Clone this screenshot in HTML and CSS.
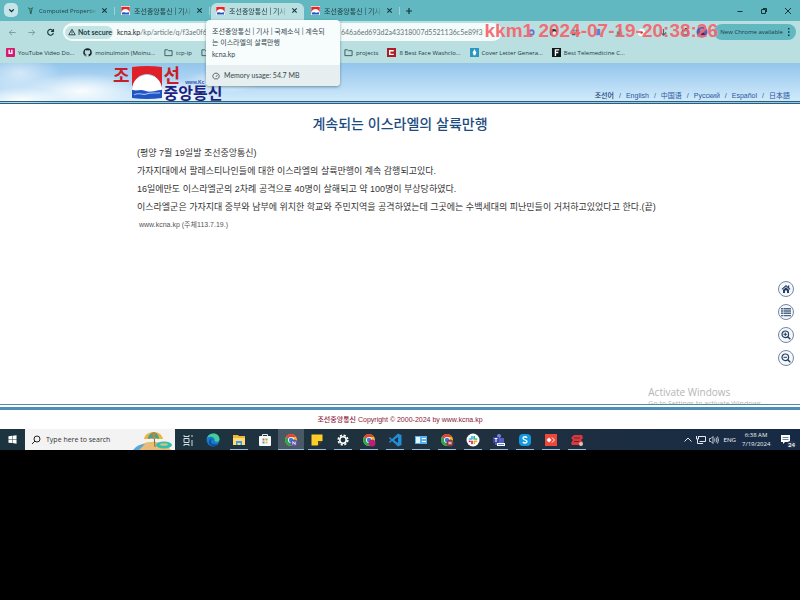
FILE: index.html
```html
<!DOCTYPE html>
<html lang="ko">
<head>
<meta charset="utf-8">
<title>조선중앙통신 | 기사 | 국제소식</title>
<link rel="stylesheet" href="styles.css">
</head>
<body>
<svg class="defs" aria-hidden="true">
  <symbol id="kcna" viewBox="0 0 32 32"><path fill="#fff" d="M0 0h32v32H0z"/><path fill="#e32626" d="M1 3h30v20C26 7 6 7 1 23z"/><path fill="#2257c4" d="M3 22c5 3 8-1 12 1s8 0 14-1v8H3z"/></symbol>
  <symbol id="folder" viewBox="0 0 10 10"><path fill="none" stroke="#37545a" d="M1 2h3l1 1h4v5.500H1z"/></symbol>
  <symbol id="close" viewBox="0 0 8 8"><path fill="none" stroke="#14343a" stroke-width="1.200" d="M1.500 1.500l5 5M6.500 1.500l-5 5"/></symbol>
  <symbol id="chrome" viewBox="0 0 14 14"><circle cx="7" cy="7" r="6" fill="#f2bd2a"/><path fill="#df4436" d="M7 7L1.800 4A6 6 0 0 1 12.200 4H7z"/><path fill="#2fa352" d="M7 7L1.800 4A6 6 0 0 0 7 13l2.600-4.500z"/><circle cx="7" cy="7" r="3" fill="#fff"/><circle cx="7" cy="7" r="2.200" fill="#3a7be0"/></symbol>
</svg>

<header class="browser">
  <div class="tabstrip">
    <button class="tab-search" aria-label="Search tabs"><svg viewBox="0 0 8 8"><path fill="none" stroke="#123" stroke-width="1.200" d="M2 3l2 2 2-2"/></svg></button>
    <div class="tab"><svg class="fav" viewBox="0 0 10 10"><path fill="#2d5f50" d="M2 1l3 2 3-2-1 3-1 5H4.500L4 5z"/><path fill="#44a376" d="M3 3l2 3 2-3-2 1z"/></svg><span class="tab-title small">Computed Propertie</span><button class="x" aria-label="Close tab"><svg><use href="#close"/></svg></button></div>
    <div class="tab"><svg class="fav"><use href="#kcna"/></svg><span class="tab-title">조선중앙통신 | 기사 |</span><button class="x" aria-label="Close tab"><svg><use href="#close"/></svg></button></div>
    <div class="tab active"><svg class="fav"><use href="#kcna"/></svg><span class="tab-title">조선중앙통신 | 기사 |</span><button class="x" aria-label="Close tab"><svg><use href="#close"/></svg></button>
      <div class="tooltip" role="tooltip">
        <div class="tip-body">
          <p class="tip-title">조선중앙통신 | 기사 | 국제소식 | 계속되는 이스라엘의 살륙만행</p>
          <p>kcna.kp</p>
        </div>
        <div class="tip-foot"><svg viewBox="0 0 10 10"><path fill="none" stroke="#37474c" d="M3 8.500A4 3.800 0 1 1 7 8.500zM5 6l2-2.500"/></svg>Memory usage: 54.7 MB</div>
      </div>
    </div>
    <div class="tab"><svg class="fav"><use href="#kcna"/></svg><span class="tab-title">조선중앙통신 | 기사 |</span><button class="x" aria-label="Close tab"><svg><use href="#close"/></svg></button></div>
    <button class="new-tab" aria-label="New tab"><svg viewBox="0 0 8 8"><path stroke="#14343a" stroke-width="1.200" d="M4 1v6M1 4h6"/></svg></button>
    <div class="win-buttons">
      <button aria-label="Minimize"><svg viewBox="0 0 8 8"><path stroke="#14343a" d="M1.500 4.500h5"/></svg></button>
      <button aria-label="Restore"><svg viewBox="0 0 8 8"><path fill="none" stroke="#14343a" d="M1.500 2.500h4v4h-4zM3 1.500h3.500V5"/></svg></button>
      <button aria-label="Close"><svg viewBox="0 0 8 8"><path stroke="#14343a" d="M1 1l6 6M7 1L1 7"/></svg></button>
    </div>
  </div>

  <div class="toolbar">
    <button class="nav dim" aria-label="Back"><svg viewBox="0 0 10 10"><path fill="none" stroke="currentColor" d="M8.500 5h-7M4.500 2l-3 3 3 3"/></svg></button>
    <button class="nav dim" aria-label="Forward"><svg viewBox="0 0 10 10"><path fill="none" stroke="currentColor" d="M1.500 5h7M5.500 2l3 3-3 3"/></svg></button>
    <button class="nav" aria-label="Reload"><svg viewBox="0 0 10 10"><path fill="none" stroke="currentColor" stroke-width="1.300" d="M8 3.500A3.200 3.200 0 1 0 8.200 5.500M8.300 1v2.800H5.500"/></svg></button>
    <div class="omnibox">
      <button class="chip"><svg viewBox="0 0 10 10"><path fill="none" stroke="#17282c" d="M5 1.500L9 8.500H1zM5 4v2.200M5 7v1"/></svg>Not secure</button>
      <div class="url"><b>kcna.kp</b>/kp/article/q/f3ae0f6</div>
      <div class="url rest">646a6ed693d2a43318007d5521136c5e89f3</div>
    </div>
    <div class="extensions">
      <svg viewBox="0 0 10 10"><circle cx="5" cy="5" r="3.500" fill="#6078c8"/><circle cx="5" cy="5" r="1.500" fill="#b9dfe0"/></svg>
      <svg viewBox="0 0 10 10"><circle cx="5" cy="5" r="4" fill="#242c33"/><circle cx="6" cy="6" r="2.500" fill="#e6eef0"/></svg>
      <svg viewBox="0 0 10 10"><path fill="#555b65" d="M1 2h3v2H1zM5 2h4v2H5zM1 6h4v2H1zM7 5h2v3H7z"/></svg>
      <svg viewBox="0 0 10 10"><rect x="2" y="1" width="6" height="7" fill="#5d83ca"/></svg>
      <svg viewBox="0 0 10 10"><path fill="#6d8d86" d="M2 4h2V1h3v3h1v5H2z"/></svg>
      <svg viewBox="0 0 10 10"><circle cx="5" cy="5" r="4" fill="#fff"/><circle cx="5" cy="5" r="1.500" fill="#cc2929"/></svg>
      <svg viewBox="0 0 10 10"><path fill="none" stroke="#46666a" stroke-width="1.300" d="M5 1v7M2 5l3 3 3-3"/></svg>
      <svg viewBox="0 0 10 10"><path fill="none" stroke="#252f32" stroke-width="1.300" d="M2 3h2c0-3 3-3 3 0h1v5H2z"/></svg>
    </div>
    <svg class="avatar" viewBox="0 0 12 12"><circle cx="6" cy="6" r="5.500" fill="#625bad"/><path fill="#302c68" d="M3 10c0-5 6-5 6 0z"/><circle cx="6" cy="4.500" r="2" fill="#be91a2"/></svg>
    <button class="update small">New Chrome available<svg viewBox="0 0 4 10"><path fill="#0c3036" d="M1 1h1.500v1.500H1zM1 4.300h1.500v1.500H1zM1 7.500h1.500V9H1z"/></svg></button>
  </div>

  <nav class="bookmarks small">
    <a href="#"><svg viewBox="0 0 10 10"><rect width="10" height="10" rx="1" fill="#d81b72"/><path fill="none" stroke="#fff" stroke-width="1.500" d="M3.500 2v4h3V2"/></svg>YouTube Video Do...</a>
    <a href="#"><svg viewBox="0 0 16 16"><path fill="#15262b" d="M8 .5a7.500 7.500 0 0 0-2.400 14.600c.4.100.5-.2.500-.4v-1.400c-2 .4-2.600-.9-2.600-.9-.4-.9-.9-1.100-.9-1.100-.7-.5 0-.5 0-.5.800.1 1.200.8 1.200.8.700 1.200 1.800.8 2.200.6.100-.5.300-.8.500-1-1.700-.2-3.400-.8-3.400-3.700 0-.8.300-1.500.8-2-.1-.2-.3-1 .1-2 0 0 .6-.2 2 .8a7 7 0 0 1 4 0c1.400-1 2-.8 2-.8.400 1 .2 1.800.1 2 .5.500.8 1.200.8 2 0 2.900-1.700 3.500-3.400 3.700.3.200.5.700.5 1.400v2.100c0 .2.100.5.500.4A7.500 7.500 0 0 0 8 .5z"/></svg>moinulmoin (Moinu...</a>
    <a href="#"><svg><use href="#folder"/></svg>tcp-ip</a>
    <a href="#" class="wide" aria-label="Folder"><svg><use href="#folder"/></svg></a>
    <a href="#"><svg><use href="#folder"/></svg>projects</a>
    <a href="#"><svg viewBox="0 0 10 10"><rect width="10" height="10" fill="#ad1d25"/><path fill="none" stroke="#fff" stroke-width="1.500" d="M7.500 3H3v4h4.500"/></svg>8 Best Face Washclo...</a>
    <a href="#"><svg viewBox="0 0 10 10"><rect width="10" height="10" fill="#2b96bf"/><path fill="#fff" d="M5 1l2 4-1 3H4L3 5z"/></svg>Cover Letter Genera...</a>
    <a href="#"><svg viewBox="0 0 10 10"><rect width="10" height="10" fill="#10171a"/><path fill="none" stroke="#fff" stroke-width="1.500" d="M3.800 9V2H8M3.800 5H7"/></svg>Best Telemedicine C...</a>
  </nav>
</header>

<div class="site">
  <header class="masthead">
    <a href="#" class="logo">
      <span class="red">조</span>
      <svg viewBox="0 0 32 32" preserveAspectRatio="none"><path fill="#df2028" d="M1 1Q16-1 31 1v21C28 3 4 3 1 22z"/><path fill="#fff" d="M1 23C2 4 30 4 31 23q-15 3-30 0z"/><path fill="#2155c5" d="M1 23c5 2 8-1 13 1s10 0 17-1v8Q16 33 1 31z"/><path fill="none" stroke="#a9c7f2" d="M3 28c6-3 8 1 13-1s8 0 13-1"/></svg>
      <span class="logo-right"><span class="logo-top"><span class="red">선</span><small>www.Kc</small></span><span class="navy">중앙통신</span></span>
    </a>
    <nav class="langs"><a href="#" class="on">조선어</a><i>/</i><a href="#">English</a><i>/</i><a href="#">中国语</a><i>/</i><a href="#">Русский</a><i>/</i><a href="#">Español</a><i>/</i><a href="#">日本語</a></nav>
  </header>

  <main>
    <h1>계속되는 이스라엘의 살륙만행</h1>
    <article>
      <p>(평양 7월 19일발 조선중앙통신)</p>
      <p>가자지대에서 팔레스티나인들에 대한 이스라엘의 살륙만행이 계속 감행되고있다.</p>
      <p>16일에만도 이스라엘군의 2차례 공격으로 40명이 살해되고 약 100명이 부상당하였다.</p>
      <p>이스라엘군은 가자지대 중부와 남부에 위치한 학교와 주민지역을 공격하였는데 그곳에는 수백세대의 피난민들이 거처하고있었다고 한다.(끝)</p>
      <p class="source">www.kcna.kp (주체113.7.19.)</p>
    </article>
    <div class="side">
      <button aria-label="Home"><svg viewBox="0 0 10 10"><path fill="#27405f" d="M5 1l4.500 4-.7.700L5 2.500 1.200 5.700.5 5zM7 1.500h1.200V4L7 3zM2 5.700l3-2.500 3 2.500V9H6V6.500H4V9H2z"/></svg></button>
      <button aria-label="List"><svg viewBox="0 0 10 10"><path fill="#4c6580" d="M0 1h2v1.500H0zM2.500 1H10v1.500H2.500zM0 3.300h2v1.500H0zM2.500 3.300H10v1.500H2.500zM0 5.600h2v1.500H0zM2.500 5.600H10v1.500H2.500zM0 8h2v1.300H0zM2.500 8H10v1.300H2.500z"/></svg></button>
      <button aria-label="Zoom in"><svg viewBox="0 0 10 10"><circle cx="4.300" cy="4.300" r="3.300" fill="none" stroke="#27405f" stroke-width="1.200"/><path stroke="#27405f" stroke-width="1.500" d="M6.800 6.800l2.500 2.500"/><path stroke="#27405f" d="M4.300 2.500v3.600M2.500 4.300h3.600"/></svg></button>
      <button aria-label="Zoom out"><svg viewBox="0 0 10 10"><circle cx="4.300" cy="4.300" r="3.300" fill="none" stroke="#27405f" stroke-width="1.200"/><path stroke="#27405f" stroke-width="1.500" d="M6.800 6.800l2.500 2.500"/><path stroke="#27405f" d="M2.500 4.300h3.600"/></svg></button>
    </div>
    <div class="watermark"><strong>Activate Windows</strong><span>Go to Settings to activate Windows.</span></div>
  </main>
  <footer>조선중앙통신 Copyright © 2000-2024 by www.kcna.kp</footer>
</div>

<div class="taskbar">
  <button class="start" aria-label="Start"><svg viewBox="0 0 10 10"><path fill="#fff" d="M.5 1.500l4-.6v3.800h-4zM5 .8L9.500.2v4.500H5zM.5 5.200h4V9l-4-.5zM5 5.200h4.500v4.500L5 9z"/></svg></button>
  <label class="search"><svg class="lens" viewBox="0 0 10 10"><circle cx="6" cy="4" r="3" fill="none" stroke="#222"/><path stroke="#222" d="M4 6L1 9"/></svg><input type="text" placeholder="Type here to search" aria-label="Search">
    <svg class="beach" viewBox="0 0 42 20"><path fill="#e8bd79" d="M2 20C8 10 28 8 38 20z"/><path fill="#5aa6da" d="M0 20c3-4 7-6 12-6l-6 6z"/><path stroke="#86613d" d="M21 5l1 12"/><path fill="#efb43d" d="M11 9C12 4 16 2 21 2s8 3 9 7z"/><path fill="#44a58a" d="M15 9c0-4 3-6 6-7 3 1 5 3 5 7l-3-1-2 1-2-1z"/><path fill="#e4763b" d="M20 8V2h2v6z"/><ellipse cx="31" cy="15" rx="8" ry="3.500" fill="#2fc0ae"/><ellipse cx="31" cy="14.500" rx="4" ry="1.300" fill="#d9bd83"/></svg>
  </label>
  <div class="apps">
    <button class="plain" aria-label="Task view"><svg viewBox="0 0 14 14"><path fill="none" stroke="#d4dde2" d="M3 5.500h5v4H3zM3 2v1.500h5V2M3 13v-1.500h5V13M11 2v2M11 7v6"/></svg></button>
    <button class="plain" aria-label="Edge"><svg viewBox="0 0 14 14"><circle cx="7" cy="7" r="6.500" fill="#1879cf"/><path fill="#43cf97" d="M1 5C3-1 13-1 13.500 6c0 3-4 3.500-5 2C10 5 5 2 1 5z"/><path fill="#114b9c" d="M5 7c-1 4 3 5 7 4-3 4-9 2-9-2 0-2 2-4 4-3-1 0-2 .5-2 1z"/></svg></button>
    <button aria-label="File Explorer"><svg viewBox="0 0 14 14"><path fill="#eeb43b" d="M1 2h5l1 1h6v9H1z"/><path fill="#ffdc75" d="M1 5h12v7H1z"/><path fill="#3e9fdf" d="M4 8h6v4H8.500v-2h-3v2H4z"/></svg></button>
    <button class="plain" aria-label="Store"><svg viewBox="0 0 14 14"><path fill="none" stroke="#e5eef3" d="M4.500 4V1.500h5V4"/><rect x="1" y="3" width="12" height="10" rx="1" fill="#f7fafc"/><path fill="#e95b35" d="M4.500 5.500h2v2h-2z"/><path fill="#7cb83e" d="M7.500 5.500h2v2h-2z"/><path fill="#27a4e3" d="M4.500 8.500h2v2h-2z"/><path fill="#f7ba2c" d="M7.500 8.500h2v2h-2z"/></svg></button>
    <button class="current" aria-label="Chrome"><svg viewBox="0 0 14 14"><use href="#chrome"/><circle cx="10" cy="10" r="3.500" fill="#6252a8"/><path fill="none" stroke="#fff" stroke-width=".8" d="M8.800 11.500v-3l2.400 3v-3"/></svg></button>
    <button aria-label="Sticky Notes"><svg viewBox="0 0 14 14"><path fill="#ffcf28" d="M1.500 1.500h11v6l-5 5h-6z"/><path fill="#4b421e" d="M8 12.500V8h4.500z"/></svg></button>
    <button aria-label="Settings"><svg viewBox="0 0 14 14"><circle cx="7" cy="7" r="4.800" fill="none" stroke="#fff" stroke-width="1.600" stroke-dasharray="2.200 1.570"/><circle cx="7" cy="7" r="3.200" fill="none" stroke="#fff" stroke-width="1.600"/></svg></button>
    <button aria-label="Chrome profile"><svg viewBox="0 0 14 14"><use href="#chrome"/><circle cx="10" cy="10" r="3.500" fill="#bd2071"/></svg></button>
    <button aria-label="VS Code"><svg viewBox="0 0 14 14"><path fill="#238dd5" d="M10 .5l3.500 1.500v10L10 13.500 4 8 2 9.700.7 9 3 7 .7 5 2 4.300 4 6zM10 4L6 7l4 3z"/></svg></button>
    <button aria-label="Contacts"><svg viewBox="0 0 14 14"><path fill="#58b3ec" d="M1 3h12v8H1z"/><path fill="#e5f5ff" d="M2 4h4v6H2z"/><path stroke="#fff" d="M8 5.500h4M8 8.500h4"/></svg></button>
    <button aria-label="Chrome profile 2"><svg viewBox="0 0 14 14"><use href="#chrome"/><circle cx="10" cy="10" r="3.500" fill="#8c3442"/><path stroke="#fff" stroke-width=".8" d="M9 8.500v3M11 8.500v3M9 10h2"/></svg></button>
    <button aria-label="Slack"><svg viewBox="0 0 14 14"><circle cx="7" cy="7" r="6.500" fill="#fff"/><g stroke-width="1.700" stroke-linecap="round"><path stroke="#36b9df" d="M6 3.500v2.300M3.500 6h2"/><path stroke="#2eb67d" d="M8.200 3.500V6M10.500 6H9.800"/><path stroke="#e01e5a" d="M6 8.300v2.200M3.500 8.300h.5"/><path stroke="#e5ae2d" d="M8.300 8.300h2.200M8.300 10v.5"/></g></svg></button>
    <button aria-label="Teams"><svg viewBox="0 0 14 14"><circle cx="7" cy="3" r="2" fill="#7884dc"/><path fill="#5360bd" d="M3 5h9v7H3z"/><path fill="#3946a2" d="M1 4h6v6H1z"/><path stroke="#fff" d="M2.500 5.500h3M4 5.500V9"/><path fill="#fff" d="M5 10h8v3H5z"/><path fill="#408acf" d="M6 11h6v1H6z"/></svg></button>
    <button aria-label="Skype"><svg viewBox="0 0 14 14"><rect x="1" y="1" width="12" height="12" rx="4" fill="#1299df"/><path fill="none" stroke="#fff" stroke-width="1.400" d="M9 4.800C8 3.300 5 3.500 5 5.300s4 1.200 4 3.200-3 2-4.200.5"/></svg></button>
    <button aria-label="AnyDesk"><svg viewBox="0 0 14 14"><path fill="#ed493b" d="M1 1h12v12H1z"/><path fill="#fff" d="M5 4.500L7.500 7 5 9.500 2.500 7z"/><path fill="none" stroke="#fff" d="M8 4.500L10.500 7 8 9.500"/></svg></button>
    <button aria-label="Remote"><svg viewBox="0 0 14 14"><path fill="#d7393d" d="M4 2h8l1 3-2 2 2 2-2 3H2L1 10l2-3-2-2z"/><path stroke="#69252c" d="M4 5h6M4 8.500h5"/><circle cx="11" cy="11" r="2" fill="#e8c1c1"/></svg></button>
  </div>
  <div class="tray">
    <svg viewBox="0 0 10 10"><path fill="none" stroke="#e3eaf0" d="M1.500 6.500L5 3l3.500 3.500"/></svg>
    <svg viewBox="0 0 10 10"><path fill="none" stroke="#e3eaf0" d="M2.500 1.500h7v5h-6M.5 1v3h2V1M1.500 4v4.500H7"/></svg>
    <svg viewBox="0 0 10 10"><path fill="none" stroke="#e3eaf0" stroke-width=".8" d="M.5 3.500H2l2-2v7l-2-2H.5zM5.500 3.500q1 1.500 0 3M7 2.500q2 2.500 0 5M8.500 1.500q2 3.500 0 7"/></svg>
    <span class="lang">ENG</span>
    <time>6:38 AM<br>7/19/2024</time>
    <button class="notify" aria-label="Notifications"><svg viewBox="0 0 12 12"><path fill="#fff" d="M1 1h9v7H5L3 10V8H1z"/><path stroke="#7a8492" d="M2.500 3.500h6M2.500 5.500h6"/></svg><span>24</span></button>
  </div>
</div>
<div class="stamp">kkm1 2024-07-19-20:38:26</div>
</body>
</html>
```
FILE: styles.css
```css
* { box-sizing: border-box; }
body {
  margin: 0;
  min-height: 100vh;
  position: relative;
  background: #000;
  font-family: Lato, "Noto Sans CJK KR", sans-serif;
  font-size: 7px;
  line-height: 10px;
  color: #1d3a40;
}
p, h1 { margin: 0; }
button { padding: 0; border: 0; background: none; font: inherit; color: inherit; }
a { color: inherit; text-decoration: none; }
svg { display: block; flex: none; }
.defs { display: none; }
.small { font-family: "Open Sans", sans-serif; font-size: 6px; }

/* Browser window */
.browser { background: #b9dfe0; }
.tabstrip { display: flex; align-items: stretch; height: 21px; padding-left: 4px; background: #62b8c0; }
.tab-search {
  width: 14px; height: 14px; margin: 3px 3px 0 0; border-radius: 5px;
  background: #c4e5e7; display: grid; place-items: center;
}
.tab-search svg { width: 9px; height: 9px; }
.tab {
  position: relative; flex: 0 1 95px; min-width: 0; display: flex; align-items: center;
  padding: 0 7px 0 5px; gap: 4px;
}
.tab::after { content: ""; position: absolute; right: 1px; top: 7px; width: 1px; height: 8px; background: #9fd3d6; }
.tab.active::after { display: none; }
.tab.active::before {
  content: ""; position: absolute; inset: 3px 2px 0 0; background: #b9dfe0;
  border-radius: 6px 6px 0 0;
}
.fav { width: 9px; height: 9px; position: relative; }
.tab-title {
  position: relative; flex: 1; min-width: 0; overflow: hidden; white-space: nowrap;
  mask-image: linear-gradient(90deg, #000 85%, transparent);
}
.x { position: relative; width: 8px; height: 8px; }
.x svg { width: 7px; height: 7px; }
.new-tab { width: 16px; display: grid; place-items: center; }
.new-tab svg { width: 8px; height: 8px; }
.win-buttons { display: flex; margin-left: auto; }
.win-buttons button { width: 24px; display: grid; place-items: center; }
.win-buttons svg { width: 8px; height: 8px; }

.tooltip {
  position: absolute; z-index: 5; left: -5px; top: 20px; width: 134px;
  border-radius: 4px; overflow: hidden; background: #f7fcfd;
  box-shadow: 0 1px 3px #345a6a99; line-height: 11px; color: #35474c;
}
.tip-body { padding: 6px 10px 5px 6px; height: 45px; }
.tip-title { margin-bottom: 1px; word-break: break-all; }
.tip-foot { display: flex; align-items: center; gap: 4px; height: 21px; padding: 0 6px; background: #e6eeef; }
.tip-foot svg { width: 8px; height: 8px; }

.toolbar { display: flex; align-items: center; height: 22px; padding: 0 4px 0 3px; }
.nav { width: 19px; display: grid; place-items: center; }
.nav svg { width: 9px; height: 9px; }
.nav.dim { color: #73999e; }
.omnibox {
  display: flex; align-items: center; flex: 1; height: 18px; min-width: 0;
  margin-left: 3px; padding-left: 2px; border-radius: 9px; background: #f4fbfb;
}
.chip { display: flex; align-items: center; gap: 2px; width: 48px; height: 13px; padding: 0 3px; border-radius: 7px; background: #c3e3e4; white-space: nowrap; font-weight: 700; }
.chip svg { width: 8px; height: 8px; }
.url { width: 228px; padding-left: 4px; white-space: nowrap; color: #66757a; }
.url b { font-weight: 400; color: #17282c; }
.url.rest { flex: 1; min-width: 0; padding: 0; }
.extensions { display: flex; justify-content: space-around; width: 194px; flex: none; padding-left: 18px; }
.extensions svg { width: 9px; height: 9px; }
.avatar { width: 12px; height: 12px; margin-right: 6px; }
.update { display: flex; align-items: center; gap: 4px; height: 16px; padding: 0 5px 0 6px; border-radius: 8px; background: #62b8c0; white-space: nowrap; }
.update svg { width: 4px; height: 10px; }

.bookmarks { display: flex; align-items: center; gap: 9px; height: 20px; padding: 0 6px 1px; white-space: nowrap; }
.bookmarks a { display: flex; align-items: center; gap: 3px; }
.bookmarks svg { width: 9px; height: 9px; }
.bookmarks .wide { width: 134px; }

/* News site */
.site { position: relative; background: #fff; font-family: "Liberation Sans", "Noto Sans CJK KR", sans-serif; }
.masthead {
  display: flex; justify-content: space-between; align-items: flex-end;
  height: 41px; padding: 0 10px 0 113px;
  border-bottom: 3px double #2d6276;
  background:
    radial-gradient(ellipse 40px 14px at 22px 38px, #fff, transparent),
    radial-gradient(ellipse 60px 18px at 82px 28px, #ffffffee, transparent),
    radial-gradient(ellipse 40px 20px at 20px 10px, #ffffff88, transparent),
    radial-gradient(ellipse 50px 18px at 175px 34px, #ffffffdd, transparent),
    radial-gradient(ellipse 40px 12px at 225px 18px, #ffffffaa, transparent),
    linear-gradient(#93c5ec, #d0eafb);
}
.logo { display: flex; align-items: flex-start; align-self: flex-start; padding-top: 3px; font-weight: 700; }
.logo svg { width: 32px; height: 33px; margin: 0 1px; }
.red { color: #c91d29; font-size: 18px; line-height: 20px; }
.logo-right { display: flex; flex-direction: column; }
.logo-top { display: flex; align-items: flex-end; gap: 5px; }
.logo small { font-size: 5px; line-height: 8px; color: #3658b0; }
.navy { color: #1c2383; font-size: 16px; line-height: 15px; }
.langs { display: flex; gap: 5px; color: #2a56a0; }
.langs i { font-style: normal; }
.langs .on { color: #173c78; font-weight: 500; }

main { position: relative; min-height: 50vh; padding: 10px 16px 0 137px; overflow: hidden; }
h1 { margin: 0 -16px 10px -137px; text-align: center; font-size: 14px; line-height: 20px; font-weight: 500; color: #1d4b80; }
article { font-size: 9px; line-height: 18px; color: #333; }
.source { padding-left: 2px; font-size: 7px; color: #555; }
.side { position: absolute; right: 6px; top: 177px; display: grid; gap: 7px; }
.side button { width: 16px; height: 16px; border: 1px solid #7387a0; border-radius: 50%; background: #f4f8fc; display: grid; place-items: center; }
.side svg { width: 10px; height: 10px; }
.watermark { position: absolute; right: 37px; bottom: -5px; display: grid; font-family: "Open Sans", sans-serif; color: #b5b5b5; }
.watermark strong { font-size: 10px; line-height: 14px; font-weight: 400; }
footer {
  padding: 10px 0 4px; text-align: center; color: #8d1833; font-weight: 500;
  border-top: 1px solid #4b8cae;
  background: linear-gradient(#fff 2px, #4d8fb7 2px, #4d8fb7 5px, #fff 5px);
}

/* Windows taskbar */
.taskbar { display: flex; height: 21px; background: linear-gradient(90deg, #1c3440, #20303f 60%, #172a45); color: #eef3f6; }
.start { width: 25px; display: grid; place-items: center; }
.start svg { width: 9px; height: 9px; }
.search { display: flex; align-items: center; width: 150px; padding-left: 6px; background: #f3f3f3; }
.search input { flex: 1; min-width: 0; margin-left: 5px; padding: 0; border: 0; background: none; font: 7px/10px "Open Sans", sans-serif; color: #333; }
.search input::placeholder { color: #333; }
.search .lens { width: 10px; height: 10px; }
.beach { width: 42px; height: 20px; align-self: flex-end; }
.apps { display: flex; }
.apps button { width: 26px; display: grid; place-items: center; background: linear-gradient(#92bcdc, #92bcdc) center bottom / 18px 1px no-repeat; }
.apps button:first-child { width: 25px; }
.apps button.plain { background: none; }
.apps button.current { background-color: #4a5966; background-size: 26px 1px; }
.apps svg { width: 14px; height: 14px; }
.tray { display: flex; align-items: center; margin-left: auto; gap: 3px; padding-right: 8px; }
.tray svg { width: 10px; height: 10px; }
.lang, time { font-size: 6px; }
.lang { margin: 0 3px 0 2px; }
time { width: 28px; text-align: center; line-height: 9px; font-family: "Open Sans", sans-serif; }
.notify { position: relative; margin-left: 7px; }
.notify svg { width: 12px; height: 12px; }
.notify span { position: absolute; right: -4px; bottom: -2px; padding: 0 1px; border-radius: 4px; background: #28364b; font-size: 6px; line-height: 7px; font-weight: 700; }

.stamp { position: absolute; right: 82px; top: 20px; font: 700 19px/22px "Liberation Sans", sans-serif; color: #f5666ff2; white-space: nowrap; z-index: 6; }
```
